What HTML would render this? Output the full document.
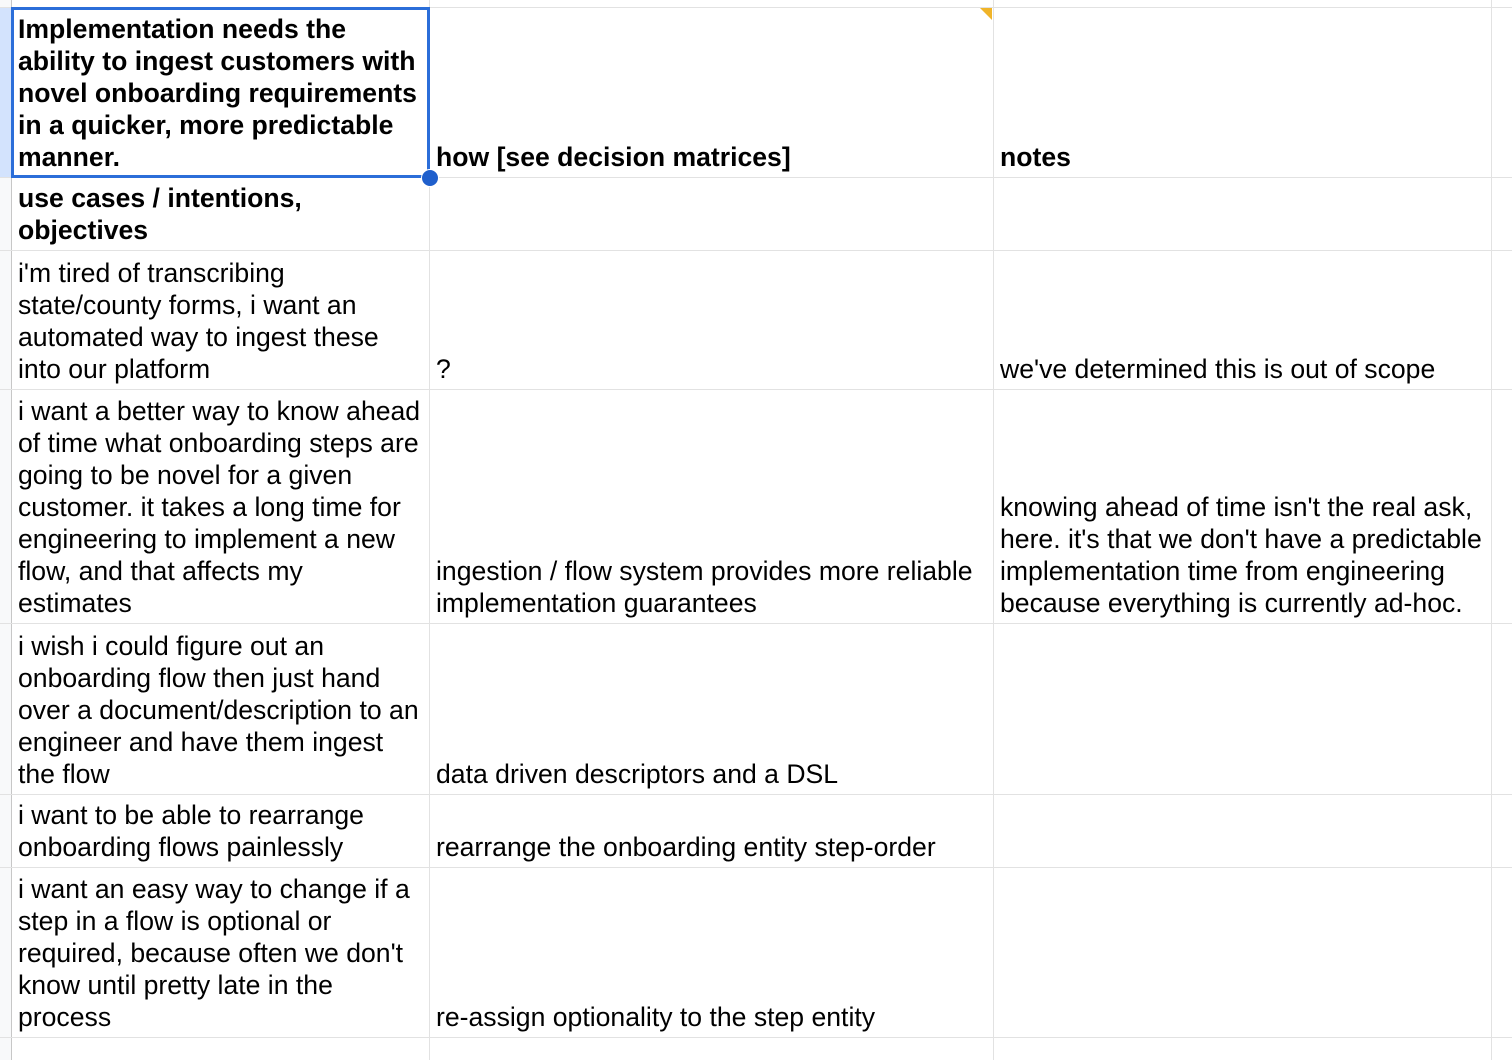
<!DOCTYPE html>
<html><head><meta charset="utf-8"><style>
body{margin:0;width:1512px;height:1060px;overflow:hidden;background:#fff;font-family:"Liberation Sans",Arial,sans-serif;position:relative}
.h{position:absolute;left:0;right:0;height:1px;background:#e2e2e2}
.v{position:absolute;top:0;bottom:0;width:1px;background:#e2e2e2}
.c{position:absolute;font-size:26.6px;line-height:32px;color:#000;white-space:nowrap;display:flex;flex-direction:column;justify-content:flex-end;padding-bottom:5px;box-sizing:border-box}
.b{font-weight:bold}
</style></head><body>
<div style="position:absolute;left:0;top:0;width:11px;height:1060px;background:#f8f9fa"></div>
<div style="position:absolute;left:0;top:8px;width:11px;height:169px;background:#d3e3fd"></div>
<div class="v" style="left:11px;background:#c7c7c7"></div>
<div class="v" style="left:429px"></div>
<div class="v" style="left:993px"></div>
<div class="v" style="left:1491px"></div>
<div class="h" style="top:7px"></div>
<div class="h" style="top:177px"></div>
<div class="h" style="top:250px"></div>
<div class="h" style="top:389px"></div>
<div class="h" style="top:623px"></div>
<div class="h" style="top:794px"></div>
<div class="h" style="top:867px"></div>
<div class="h" style="top:1037px"></div>
<div style="position:absolute;left:980px;top:8px;width:0;height:0;border-top:12px solid #f0b429;border-left:12px solid transparent"></div>

<div class="c b" style="left:18px;top:8px;height:170px">Implementation needs the<br>ability to ingest customers with<br>novel onboarding requirements<br>in a quicker, more predictable<br>manner.</div>
<div class="c b" style="left:436px;top:8px;height:170px">how [see decision matrices]</div>
<div class="c b" style="left:1000px;top:8px;height:170px">notes</div>

<div class="c b" style="left:18px;top:178px;height:73px">use cases / intentions,<br>objectives</div>

<div class="c" style="left:18px;top:251px;height:139px">i'm tired of transcribing<br>state/county forms, i want an<br>automated way to ingest these<br>into our platform</div>
<div class="c" style="left:436px;top:251px;height:139px">?</div>
<div class="c" style="left:1000px;top:251px;height:139px">we've determined this is out of scope</div>

<div class="c" style="left:18px;top:390px;height:234px">i want a better way to know ahead<br>of time what onboarding steps are<br>going to be novel for a given<br>customer. it takes a long time for<br>engineering to implement a new<br>flow, and that affects my<br>estimates</div>
<div class="c" style="left:436px;top:390px;height:234px">ingestion / flow system provides more reliable<br>implementation guarantees</div>
<div class="c" style="left:1000px;top:390px;height:234px">knowing ahead of time isn't the real ask,<br>here. it's that we don't have a predictable<br>implementation time from engineering<br>because everything is currently ad-hoc.</div>

<div class="c" style="left:18px;top:624px;height:171px">i wish i could figure out an<br>onboarding flow then just hand<br>over a document/description to an<br>engineer and have them ingest<br>the flow</div>
<div class="c" style="left:436px;top:624px;height:171px">data driven descriptors and a DSL</div>

<div class="c" style="left:18px;top:795px;height:73px">i want to be able to rearrange<br>onboarding flows painlessly</div>
<div class="c" style="left:436px;top:795px;height:73px">rearrange the onboarding entity step-order</div>

<div class="c" style="left:18px;top:868px;height:170px">i want an easy way to change if a<br>step in a flow is optional or<br>required, because often we don't<br>know until pretty late in the<br>process</div>
<div class="c" style="left:436px;top:868px;height:170px">re-assign optionality to the step entity</div>

<div style="position:absolute;left:11px;top:7px;width:419px;height:171px;border:3px solid #2b6ed9;box-sizing:border-box"></div>
<div style="position:absolute;left:421px;top:169px;width:18px;height:18px;border-radius:50%;background:#1f5fcc;border:1px solid #fff;box-sizing:border-box"></div>
</body></html>
